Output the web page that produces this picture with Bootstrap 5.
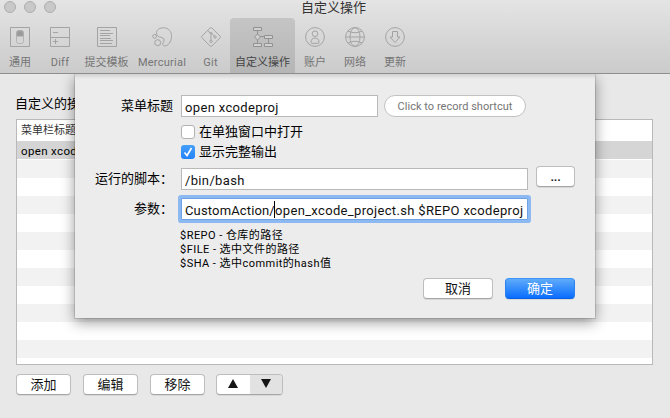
<!DOCTYPE html>
<html lang="zh-CN">
<head>
<meta charset="utf-8">
<title>自定义操作</title>
<link href="https://cdn.jsdelivr.net/npm/bootstrap@5.3.0/dist/css/bootstrap.min.css" rel="stylesheet">
<style>
body{width:670px;height:418px;background:#e8e8e8;font:13px/16px Roboto,"Noto Sans CJK SC",sans-serif;color:#000}
.toolbar-head{height:74px;background:linear-gradient(#e4e4e4,#cbcbcb);border-bottom:1px solid #8e8e8e}
.win-title{height:18px;padding-right:3px;line-height:15px;font-size:13px;color:#333}
.dots{left:4px;top:1px;gap:8px}
.dots i{width:12px;height:12px;border-radius:50%;background:#c8c8c8;border:1px solid #aeaeae}
.tool{height:55px;padding-top:9px;font-size:11px;line-height:14px;color:#757575;white-space:nowrap}
.tool svg{width:20px;height:20px;margin-bottom:9px;fill:none;stroke:#a3a3a3;stroke-width:1}
.tool.on{background:linear-gradient(#c5c5c5,#b5b5b5);border-radius:4px 4px 0 0;color:#454545}
.tool.on svg{stroke:#929292}
.w40{width:40px}.w53{width:53px}.w58{width:58px}.w39{width:39px}.w65{width:65px}
.latin{letter-spacing:.25px}
.pane{padding:22px 17px 0 16px}
.pane-title{margin-left:-1px}
.list-box{height:246px;margin-top:7px;border:1px solid #b9b9b9;background:repeating-linear-gradient(#f2f2f2 0 18px,#fff 18px 36px) 0 40px no-repeat #fff;font-size:11px}
.list-top{height:21px;padding-left:4px;line-height:21px;color:#333}
.list-sel{height:18px;padding-left:4px;line-height:21px;background:#d5d5d5;font-size:11.5px;letter-spacing:.35px}
.mac{height:21px;padding:0;border:1px solid #bdbdbd;border-bottom-color:#a5a5a5;border-radius:4px;background:#fff;font-size:13px;line-height:18px;color:#111;box-shadow:0 1px 0 #d8d8d8}
.mac.primary{background:linear-gradient(#5fabfa,#0a6dfd);border-color:#3b93fb #2a80f3 #0a5fe0;color:#fff}
.w55{width:55px}.w70{width:70px}
.actions{margin-top:9px;gap:12px}
.updown{width:67px;margin-left:-1px;overflow:hidden}
.updown span{flex:1}
.updown span+span{background:#e2e2e2}
.updown svg{width:10px;height:9px;margin-top:-2px;fill:#151515}
.sheet{left:75px;top:74px;width:520px;height:244px;background:#ececec;box-shadow:0 0 0 1px rgba(0,0,0,.12),0 4px 13px rgba(0,0,0,.42);clip-path:inset(0 -30px -30px -30px)}
.sheet:before{content:"";position:absolute;left:0;right:0;top:0;height:5px;background:linear-gradient(#d2d2d2,#ececec)}
.lab{width:98px;line-height:21px;text-align:right;margin-right:8px}
.fld{height:22px;border:1px solid #b9b9b9;border-radius:0;background:#fff;padding:0 3px;font-size:13px;line-height:23px;letter-spacing:.35px;color:#111;white-space:nowrap;overflow:hidden}
.w197{width:197px}.w347{width:347px}
.rec{width:142px;height:22px;margin-left:6px;border:1px solid #c2c2c2;background:#fff;font-size:11px;line-height:21px;color:#757575;letter-spacing:.03px}
.ring{box-shadow:0 0 0 3px #8db9f3;border-color:#6ea2e2;border-radius:1px;overflow:visible}
.before-caret{width:90px;letter-spacing:.15px}
.after-caret{letter-spacing:.34px}
.caret{width:1px;height:17px;background:#000;margin:2px 0 0 -1px}
.chk{width:14px;height:14px;border:1px solid #b2b2b2;border-radius:3px;background:#fff;margin-right:4px}
.chk.yes{border:0;background:linear-gradient(#45a0fb,#2483fa)}
.chk svg{width:14px;height:14px;display:block;fill:none;stroke:#fff;stroke-width:1.6}
.indent{margin-left:106px}
.hints{font-size:11px;line-height:14px;letter-spacing:.46px;margin:9px 0 0 105px}
.row-a{padding-top:21px}
.row-chk{height:14px;margin-top:6px}
.row-chk.first{margin-top:8px}
.row-b{margin-top:9px}
.row-c{margin-top:8px}
.browse{width:39px;margin:-2px 0 0 8px;letter-spacing:-.2px;font-weight:500}
.foot{gap:12px;margin:7px 20px 0 0}
</style>
</head>
<body class="position-relative overflow-hidden">
<header class="toolbar-head position-relative">
  <div class="dots d-flex position-absolute"><i></i><i></i><i></i></div>
  <div class="win-title text-center">自定义操作</div>
  <nav class="d-flex">
    <div class="tool w40 d-flex flex-column align-items-center"><svg viewBox="0 0 20 20"><path d="M.5.5h19v19H.5z"/><rect x="6.500" y="3.500" width="7" height="13" rx="2" fill="#d5d5d5" stroke="#b4b4b4"/><path d="M7 9V5.500q0-1.500 1.500-1.500h3q1.500 0 1.500 1.500V9z" fill="#999"/></svg><span>通用</span></div>
    <div class="tool w40 d-flex flex-column align-items-center"><svg viewBox="0 0 20 20"><path d="M.5.5h19v19H.5zM.5 10.500h19M3 5.500h5M3 14.500h5M5.500 12v5"/></svg><span class="latin">Diff</span></div>
    <div class="tool w53 d-flex flex-column align-items-center"><svg viewBox="0 0 20 20"><path d="M.5.5h19v19H.5zM3 3.500h10M3 6.500h13M3 8.500h10M3 11.500h11M3 13.500h13M3 16.500h12"/></svg><span>提交模板</span></div>
    <div class="tool w58 d-flex flex-column align-items-center"><svg viewBox="0 0 20 20"><circle cx="2.600" cy="9.300" r="1.900"/><circle cx="5.700" cy="15.700" r="3"/><path d="M4.500 5.800C4.500 2.500 8 .7 11.700.8c4.500.1 7.900 3.600 7.900 8.300 0 4.200-2.300 8.400-5.300 9.500-2.700 1-4.400-.7-3.300-2.700.8-1.400 1.500-2.200.7-3.900-.8-1.600-2.500-1.500-4.300-2.100-1.700-.6-2.900-2.200-2.900-4.100z"/></svg><span class="latin">Mercurial</span></div>
    <div class="tool w39 d-flex flex-column align-items-center"><svg viewBox="0 0 20 20"><path d="M9.300.8L.8 9.300q-.7.700 0 1.400l8.500 8.500q.7.700 1.400 0l8.500-8.500q.7-.7 0-1.400L10.700.8q-.7-.7-1.400 0zM6.500 3.500l2.600 2.400M10 7.200v6M11 6.500l2.300 2.500"/><circle cx="10" cy="6.200" r="1"/><circle cx="10" cy="14.300" r="1.200"/><circle cx="14" cy="10" r="1.200"/></svg><span class="latin">Git</span></div>
    <div class="tool on w65 d-flex flex-column align-items-center"><svg viewBox="0 0 20 20"><path d="M.5.500h8v3h-8zM11.500 8.500h8v3h-8zM.5 16.500h8v3h-8zM11.500 16.500h8v3h-8zM4.500 7l3 3-3 3-3-3z" fill="#d0d0d0"/><path d="M4.500 3.500V7M4.500 13v3.500M7.500 9.500h4M15.500 11.500v5"/></svg><span>自定义操作</span></div>
    <div class="tool w40 d-flex flex-column align-items-center"><svg viewBox="0 0 20 20"><circle cx="10" cy="10" r="9.400"/><circle cx="10" cy="6.700" r="2.800"/><path d="M6 15.500c0-3 1.500-4.500 4-4.500s4 1.500 4 4.500q0 .8-.8.800H6.800q-.8 0-.8-.8z"/></svg><span>账户</span></div>
    <div class="tool w40 d-flex flex-column align-items-center"><svg viewBox="0 0 20 20"><circle cx="10" cy="10" r="9.400"/><ellipse cx="10" cy="10" rx="5" ry="9.400"/><path d="M.5 10h19M3 4q7 3.600 14 0M3 16q7-3.600 14 0"/></svg><span>网络</span></div>
    <div class="tool w40 d-flex flex-column align-items-center"><svg viewBox="0 0 20 20"><circle cx="10" cy="10" r="9.400"/><path d="M7.500 4.500h5V10H15l-5 5.500L5 10h2.500z"/></svg><span>更新</span></div>
  </nav>
</header>
<main class="pane">
  <div class="pane-title">自定义的操作</div>
  <div class="list-box"><div class="list-top">菜单栏标题</div><div class="list-sel">open xcodeproj</div></div>
  <div class="actions d-flex">
    <button class="btn mac w55">添加</button><button class="btn mac w55">编辑</button><button class="btn mac w55">移除</button>
    <div class="mac updown d-flex"><span class="d-flex align-items-center justify-content-center"><svg viewBox="0 0 10 9"><path d="M5 0l5 9H0z"/></svg></span><span class="d-flex align-items-center justify-content-center"><svg viewBox="0 0 10 9"><path d="M0 0h10L5 9z"/></svg></span></div>
  </div>
</main>
<section class="sheet position-absolute">
  <div class="row-a d-flex"><div class="lab">菜单标题</div><div class="fld w197">open xcodeproj</div><div class="rec rounded-pill text-center">Click to record shortcut</div></div>
  <div class="row-chk first d-flex align-items-center indent"><span class="chk"></span><span>在单独窗口中打开</span></div>
  <div class="row-chk d-flex align-items-center indent"><span class="chk yes"><svg viewBox="0 0 14 14"><path d="M3.500 7.500l2.500 3 4.500-7.500"/></svg></span><span>显示完整输出</span></div>
  <div class="row-b d-flex"><div class="lab">运行的脚本：</div><div class="fld w347">/bin/bash</div><button class="btn mac browse">...</button></div>
  <div class="row-c d-flex"><div class="lab">参数：</div><div class="fld ring w347 d-flex"><span class="before-caret">CustomAction/</span><i class="caret"></i><span class="after-caret">open_xcode_project.sh $REPO xcodeproj</span></div></div>
  <div class="hints"><div>$REPO - 仓库的路径</div><div>$FILE - 选中文件的路径</div><div>$SHA - 选中commit的hash值</div></div>
  <div class="foot d-flex justify-content-end"><button class="btn mac w70">取消</button><button class="btn mac primary w70">确定</button></div>
</section>
<script src="https://cdn.jsdelivr.net/npm/bootstrap@5.3.0/dist/js/bootstrap.bundle.min.js"></script>
</body>
</html>
